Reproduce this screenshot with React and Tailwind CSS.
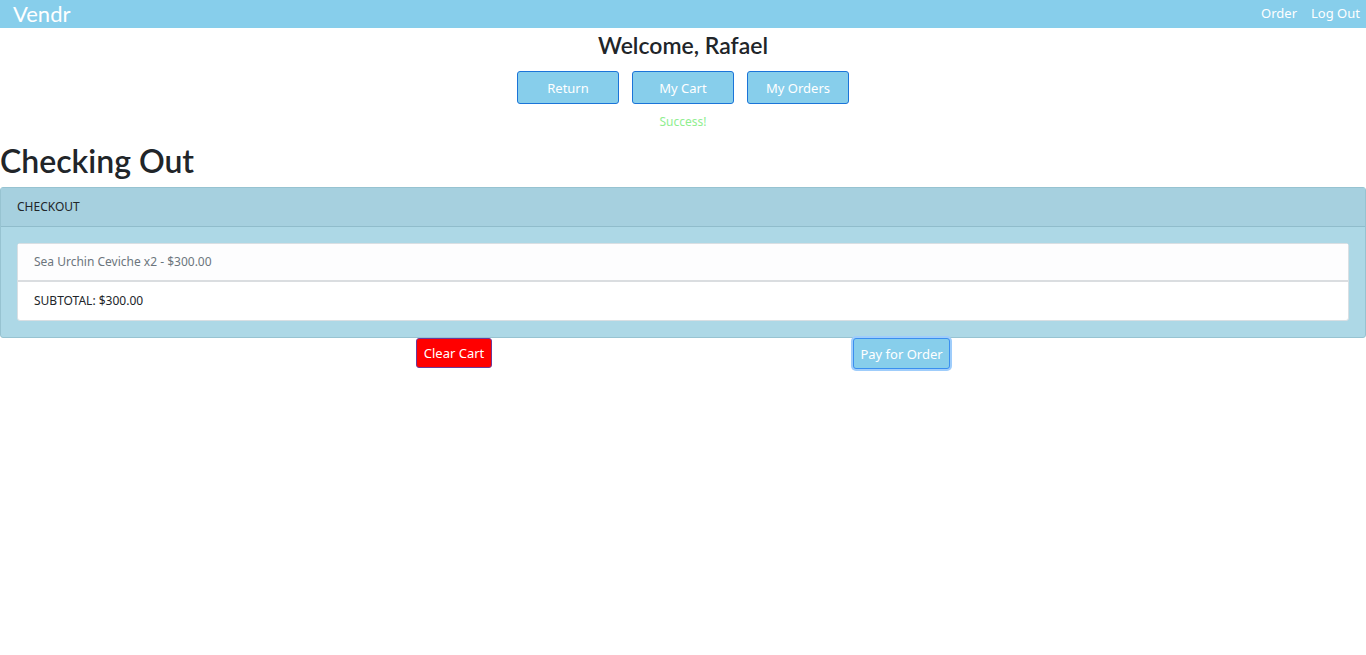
import React from "react";

const ui = { fontFamily: '"Noto Sans", "Open Sans", sans-serif' };
const head = { fontFamily: 'Lato, "Noto Sans", sans-serif' };

const NavButton = ({ children }) => (
  <button className="w-[102px] h-[33px] bg-[#87ceeb] border border-[#1b74d8] rounded-[3px] text-white text-[13px] pt-[2px]">
    {children}
  </button>
);

export default function App() {
  return (
    <div className="min-h-screen bg-white text-[#212529]" style={ui}>
      {/* navbar */}
      <nav className="h-7 bg-[#87ceeb] flex items-center justify-between pl-[13px] pr-[6px]">
        <span className="text-white text-[22px] leading-none" style={head}>
          Vendr
        </span>
        <div className="flex gap-[14px] text-white text-[13px]">
          <span>Order</span>
          <span>Log Out</span>
        </div>
      </nav>

      <h2 className="text-center text-[23px] font-semibold mt-[2px] leading-[30px]" style={head}>
        Welcome, Rafael
      </h2>

      <div className="flex justify-center gap-[13px] mt-[11px]">
        <NavButton>Return</NavButton>
        <NavButton>My Cart</NavButton>
        <NavButton>My Orders</NavButton>
      </div>

      <p className="text-center text-[12px] text-[#90ee90] mt-[9px] leading-[18px]">Success!</p>

      <h1 className="text-[32px] font-semibold leading-[40px] mt-[10px] mb-[6px]" style={head}>
        Checking Out
      </h1>

      {/* checkout card */}
      <div className="bg-[#add8e6] border border-[#97c3d1] rounded-[3px]">
        <div className="h-[39px] bg-[#a6d0df] border-b border-[#90bccb] flex items-center pl-4 text-[12px]">
          CHECKOUT
        </div>
        <div className="p-4">
          <ul className="bg-white rounded-[3px] border border-[#d9dfe3]">
            <li className="h-[38px] bg-[#fdfdfe] flex items-center pl-4 text-[12px] text-[#6c757d] border-b-2 border-[#dadde0]">
              Sea Urchin Ceviche x2 - $300.00
            </li>
            <li className="h-[38px] flex items-center pl-4 text-[12px]">SUBTOTAL: $300.00</li>
          </ul>
        </div>
      </div>

      <div className="flex justify-center gap-[361px]">
        <button className="w-[76px] h-[30px] bg-[#ff0000] border border-[#6a3a9a] rounded-[3px] text-white text-[13px] pt-[2px]">
          Clear Cart
        </button>
        <button className="w-[97px] h-[31px] bg-[#87ceeb] border border-[#3a8ff0] rounded-[3px] text-white text-[13px] ring-2 ring-[#9fcdfb] pt-[2px]">
          Pay for Order
        </button>
      </div>
    </div>
  );
}
